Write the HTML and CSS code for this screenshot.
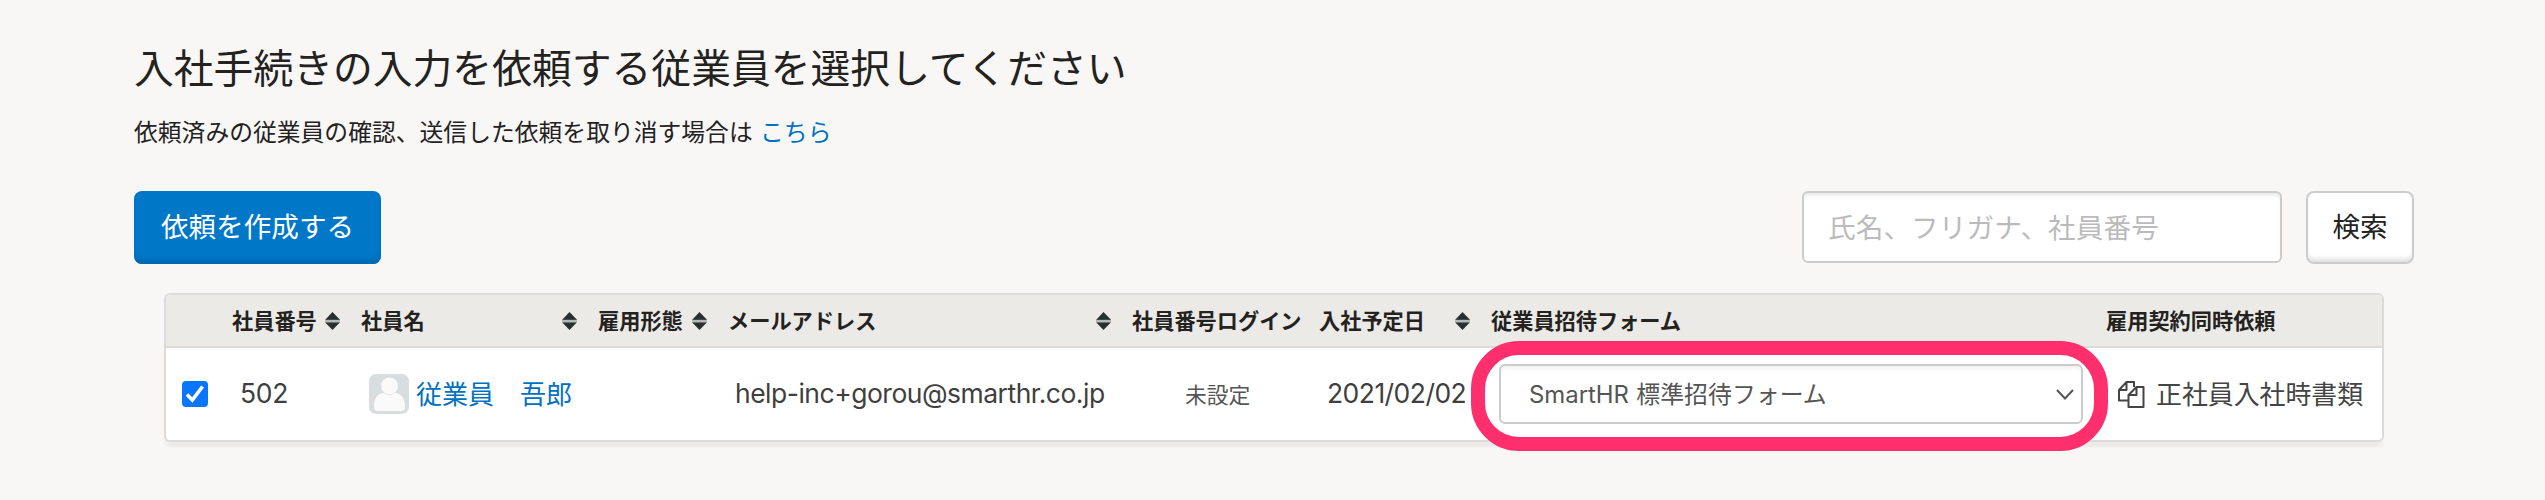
FILE: index.html
```html
<!DOCTYPE html>
<html lang="ja">
<head>
<meta charset="utf-8">
<title>入社手続き</title>
<link rel="stylesheet" href="styles.css">
</head>
<body>
<svg width="0" height="0" class="defs"><symbol id="sort" viewBox="0 0 15 18"><path d="M7.5 0 15 7.800V8H0z"/><path d="M0 10.2H15L7.5 18z"/><path class="mid" d="M0 7.8H15V10.2H0z"/></symbol></svg>
<main class="page">
  <h1 class="title">入社手続きの入力を依頼する従業員を選択してください</h1>
  <p class="lead">依頼済みの従業員の確認、送信した依頼を取り消す場合は <a class="link" href="#">こちら</a></p>
  <div class="toolbar">
    <button class="btn primary">依頼を作成する</button>
    <div class="search">
      <input class="field" type="text" placeholder="氏名、フリガナ、社員番号">
      <button class="btn plain">検索</button>
    </div>
  </div>
  <section class="table">
    <div class="row head">
      <span></span>
      <span class="th">社員番号<svg class="sort"><use href="#sort"/></svg></span>
      <span class="th">社員名<svg class="sort"><use href="#sort"/></svg></span>
      <span class="th">雇用形態<svg class="sort"><use href="#sort"/></svg></span>
      <span class="th">メールアドレス<svg class="sort"><use href="#sort"/></svg></span>
      <span class="th">社員番号ログイン</span>
      <span class="th">入社予定日<svg class="sort"><use href="#sort"/></svg></span>
      <span class="th">従業員招待フォーム</span>
      <span class="th">雇用契約同時依頼</span>
    </div>
    <div class="row body">
      <span class="check"><svg width="26" height="26" viewBox="0 0 26 26"><rect width="26" height="26" rx="4" fill="#0a75ff"/><path d="M5 13.500 10.300 19 20.600 5.500" fill="none" stroke="#fff" stroke-width="3.6"/></svg></span>
      <span class="latin id">502</span>
      <span class="name"><svg width="40" height="40" viewBox="0 0 40 40"><rect width="40" height="40" rx="7" fill="#d8dde0"/><circle cx="20.5" cy="12" r="8.5" fill="#fafafa"/><path d="M5 33C5 24 9 19 15 19q5.500 4 11 0C32 19 36 24 36 33q0 4-4 4H9q-4 0-4-4z" fill="#fafafa"/></svg><a class="link" href="#">従業員　吾郎</a></span>
      <span></span>
      <span class="latin mail">help-inc+gorou@smarthr.co.jp</span>
      <span class="unset">未設定</span>
      <span class="latin date">2021/02/02</span>
      <span class="form"><span class="select"><span class="value"><span class="brand">SmartHR</span> 標準招待フォーム</span><svg width="18" height="11" viewBox="0 0 18 11"><path d="M1 1 9 9.500 17 1" fill="none" stroke="#555" stroke-width="2"/></svg></span><span class="highlight"></span></span>
      <span class="docs"><svg width="27" height="27" viewBox="0 0 27 27" fill="none" stroke="#444" stroke-width="2" stroke-linejoin="round"><path d="M10 19.500H1V9L8.500 1H16V6M8.500 1V9H1"/><path d="M18.500 6H25.500V26H10.500V14zM18.500 6V14H10.500"/></svg><span class="doc-name">正社員入社時書類</span></span>
    </div>
  </section>
</main>
</body>
</html>
```
FILE: styles.css
```css
* { box-sizing: border-box; }
body { margin: 0; height: 500px; overflow: hidden; background: #f8f7f6; color: #23221f; font-family: "Noto Sans CJK JP", sans-serif; }
.defs { display: block; height: 0; }
.page { padding: 36px 131px 0 134px; }
.title { margin: 0; font-size: 39.8px; line-height: 60px; font-weight: 400; }
.lead { margin: 17px 0 0; font-size: 23.8px; line-height: 36px; word-spacing: 2px; }
.link { color: #0071c1; text-decoration: none; }
.toolbar { display: flex; justify-content: space-between; margin-top: 42px; height: 73px; }
.search { display: flex; gap: 24px; align-items: flex-start; }
.btn { height: 73px; padding: 0 0 5px; border-radius: 8px; font-family: inherit; font-size: 27.6px; }
.primary { width: 247px; border: 0; background: #0077c7; color: #fff; box-shadow: inset 0 -6px 5px -2px #0068b0; }
.plain { width: 108px; border: 2px solid #ccc; background: #fff; color: #23221f; box-shadow: inset 0 -5px 5px -2px #ddd; }
.field { width: 480px; height: 72px; padding: 0 24px 2px; border: 2px solid #ccc; border-radius: 6px; background: #fff; font-family: inherit; font-size: 27.7px; box-shadow: inset 0 4px 4px -2px #e6e6e6; }
.field::placeholder { color: #bbb; opacity: 1; }
.table { width: 2220px; height: 149px; margin: 29px 0 0 30px; border: 2px solid #dcdbd9; border-radius: 6px; background: #fff; box-shadow: 0 6px 3px -1px #ecebe9; }
.row { display: grid; grid-template-columns: 66px 129px 237px 130px 404px 187px 172px 615px 1fr; align-items: center; }
.head { height: 53px; border-bottom: 2px solid #dcdbd9; background: #ebeae6; border-radius: 4px 4px 0 0; font-size: 21.2px; font-weight: 700; line-height: 46px; }
.th { display: flex; height: 48px; justify-content: space-between; padding-right: 21px; white-space: nowrap; }
.sort { width: 15px; height: 18px; margin-top: 15px; fill: #26302f; }
.mid { fill: #b5b8b4; }
.body { height: 92px; font-size: 26px; color: #444; white-space: nowrap; }
.check { display: flex; padding-left: 16px; }
.latin { font-family: Inter, sans-serif; font-size: 26.5px; line-height: 32px; padding-bottom: 2px; color: #3f3f3f; }
.id { padding-left: 8px; letter-spacing: -0.3px; }
.name { display: flex; align-items: center; gap: 7px; padding-left: 8px; }
.name .link { padding-bottom: 3px; }
.mail { padding-left: 7px; letter-spacing: -0.5px; }
.unset { padding: 0 0 2px 53px; font-size: 21.8px; color: #555; }
.date { padding-left: 8px; letter-spacing: -0.55px; }
.form { position: relative; padding-left: 8px; }
.select { display: flex; align-items: center; justify-content: space-between; width: 584px; height: 60px; padding: 0 7px 0 28px; border: 2px solid #ccc; border-radius: 6px; font-size: 23.9px; color: #555; box-shadow: inset 0 4px 4px -2px #eee; }
.value { padding-bottom: 3px; word-spacing: 2px; }
.brand { font-family: Inter, sans-serif; }
.highlight { position: absolute; left: -20px; top: -23px; width: 637px; height: 110px; border: 14px solid #ff2f6d; border-radius: 48px; }
.docs { display: flex; align-items: center; gap: 11px; padding-left: 12px; }
.doc-name { padding-bottom: 3px; font-size: 25.9px; }
```
